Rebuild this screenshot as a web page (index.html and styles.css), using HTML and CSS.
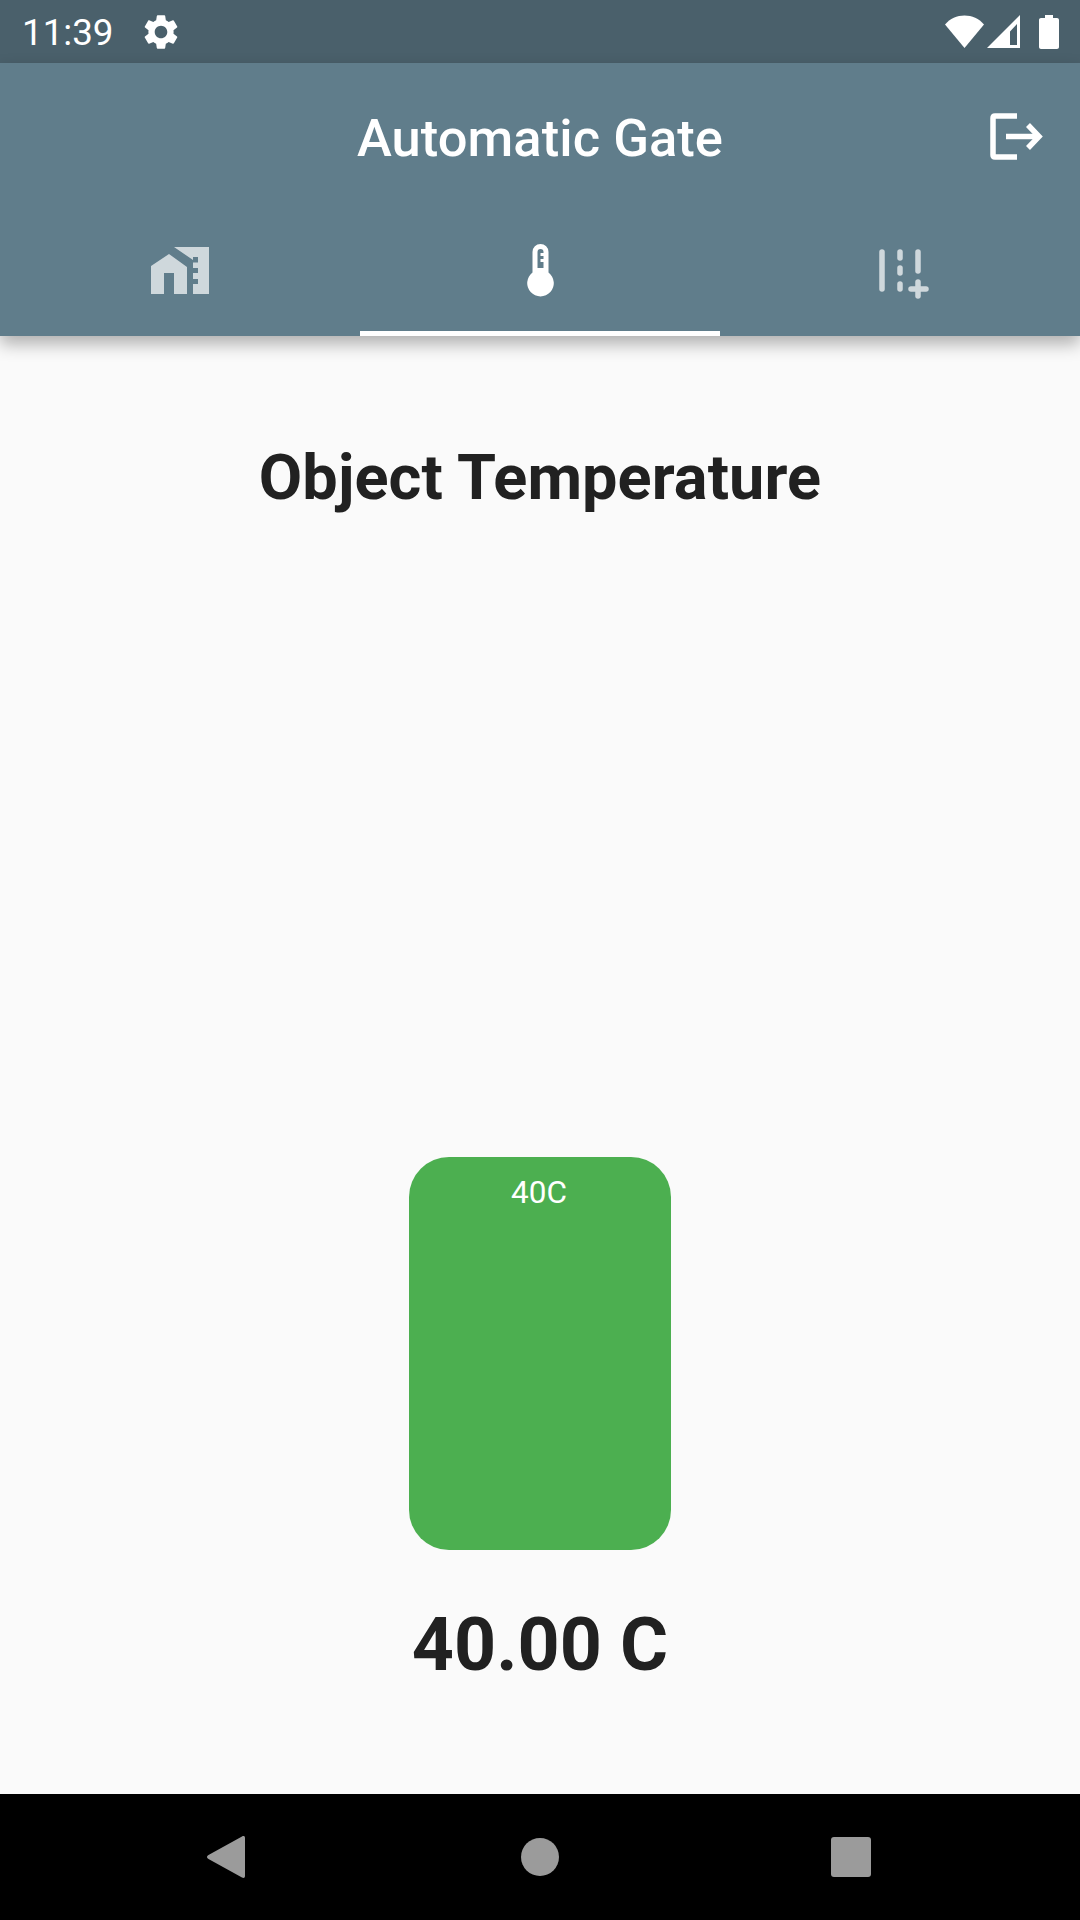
FILE: index.html
```html
<!DOCTYPE html>
<html lang="en">
<head>
    <meta charset="UTF-8">
    <meta name="viewport" content="width=device-width, initial-scale=1.0">
    <title>Automatic Gate</title>
    <link rel="stylesheet" href="styles.css">
</head>
<body>
    <div class="status-bar">
        <span class="clock">11:39</span>
        <svg class="gear" viewBox="0 0 24 24"><path d="M19.14 12.94c.04-.3.06-.61.06-.94 0-.32-.02-.64-.07-.94l2.03-1.58a.49.49 0 0 0 .12-.61l-1.92-3.32a.488.488 0 0 0-.59-.22l-2.39.96c-.5-.38-1.03-.7-1.62-.94l-.36-2.54a.484.484 0 0 0-.48-.41h-3.84c-.24 0-.43.17-.47.41l-.36 2.54c-.59.24-1.13.57-1.62.94l-2.39-.96c-.22-.08-.47 0-.59.22L2.74 8.87c-.12.21-.08.47.12.61l2.03 1.58c-.05.3-.09.63-.09.94s.02.64.07.94l-2.03 1.58a.49.49 0 0 0-.12.61l1.92 3.32c.12.22.37.29.59.22l2.39-.96c.5.38 1.03.7 1.62.94l.36 2.54c.05.24.24.41.48.41h3.84c.24 0 .44-.17.47-.41l.36-2.54c.59-.24 1.13-.56 1.62-.94l2.39.96c.22.08.47 0 .59-.22l1.92-3.32c.12-.22.07-.47-.12-.61l-2.01-1.58zM12 15.6c-1.98 0-3.6-1.62-3.6-3.6s1.62-3.6 3.6-3.6 3.6 1.62 3.6 3.6-1.62 3.6-3.6 3.6z"/></svg>
        <div class="status-icons">
            <svg class="wifi" viewBox="0 0 39 33"><path d="M0 9.500C5 3.600 12 0.500 19.500 0.500S34 3.600 39 9.500L19.500 33z"/></svg>
            <svg class="signal" viewBox="0 0 33 33"><path fill-rule="evenodd" d="M33 0V33H0zM30 9 23 16.500V30H30z"/></svg>
            <svg class="battery" viewBox="0 0 20 34"><path d="M6 0H14V3H18C19.100 3 20 3.900 20 5V32C20 33.100 19.100 34 18 34H2C.9 34 0 33.100 0 32V5C0 3.900 .9 3 2 3H6z"/></svg>
        </div>
    </div>

    <header class="app-bar">
        <div class="title-row">
            <h1 class="app-title">Automatic Gate</h1>
            <svg class="logout" viewBox="0 0 53 47" fill="none" stroke="#fff" stroke-width="5.500">
                <path d="M27 3H5Q3 3 3 5V42Q3 44 5 44H27"/>
                <path d="M16 23.500H47"/>
                <path d="M38 12 49 23.500 38 35"/>
            </svg>
        </div>
        <nav class="tabs">
            <div class="tab">
                <svg class="tab-icon home" viewBox="0 0 58 47">
                    <path d="M0 19 18 7 36 20V47H23V26H13V47H0z"/>
                    <path d="M23 0H58V47H42V37H47V32H42V26H47V21H42V15.500H47V10H42V13z"/>
                </svg>
            </div>
            <div class="tab tab-active">
                <svg class="tab-icon thermo" viewBox="0 0 27 53"><path fill-rule="evenodd" d="M5.500 8a8 8 0 0 1 16 0V28.500a13.300 13.300 0 1 1-16 0zM10.500 8V24H16.500V18H13.500V15H16.500V12H13.500V9H16.500V8a3 3 0 0 0-6 0z"/></svg>
            </div>
            <div class="tab">
                <svg class="tab-icon tune" viewBox="0 0 50 50" fill="none" stroke="#fff" stroke-width="5.500" stroke-linecap="round">
                    <path d="M3 3V40"/>
                    <path d="M21 3V9"/>
                    <path d="M21 19V24"/>
                    <path d="M21 35V40"/>
                    <path d="M39 3V22"/>
                    <path d="M39 33V47"/>
                    <path d="M32 40H47"/>
                </svg>
            </div>
        </nav>
    </header>

    <main class="content">
        <h2 class="heading">Object Temperature</h2>
        <div class="gauge">40C</div>
        <p class="reading">40.00 C</p>
    </main>

    <footer class="nav-bar">
        <svg class="nav-back" viewBox="0 0 38 42"><path d="M35 .5C36.500-.5 38 0 38 2V40C38 42 36.500 42.500 35 41.500L1.500 23C-.5 22-.5 20 1.500 19z"/></svg>
        <div class="nav-home"></div>
        <div class="nav-recent"></div>
    </footer>
</body>
</html>
```

FILE: styles.css
```css
* {
    box-sizing: border-box;
}
html, body {
    margin: 0;
    padding: 0;
}
body {
    width: 1080px;
    height: 1920px;
    display: flex;
    flex-direction: column;
    font-family: Roboto, "Noto Sans", sans-serif;
    background-color: #fafafa;
    color: #212121;
    overflow: hidden;
}

/* status bar */
.status-bar {
    height: 63px;
    flex: none;
    display: flex;
    align-items: center;
    background-color: #4a606b;
    padding: 0 21px 0 22px;
    color: #fff;
}
.clock {
    font-size: 36.75px;
    line-height: 63px;
    margin-top: 2px;
}
.gear {
    width: 42px;
    height: 42px;
    margin-left: 26px;
    fill: #fff;
}
.status-icons {
    margin-left: auto;
    display: flex;
    align-items: center;
}
.status-icons svg {
    fill: #fff;
}
.wifi {
    width: 39px;
    height: 33px;
}
.signal {
    width: 33px;
    height: 33px;
    margin-left: 3px;
}
.battery {
    width: 20px;
    height: 34px;
    margin-left: 19px;
}

/* app bar */
.app-bar {
    height: 273px;
    flex: none;
    background-color: #607d8b;
    box-shadow: 0 8px 16px rgba(0, 0, 0, 0.3);
    position: relative;
    display: flex;
    flex-direction: column;
}
.title-row {
    height: 147px;
    display: flex;
    align-items: center;
    justify-content: center;
    position: relative;
}
.app-title {
    margin: 2px 0 0;
    font-size: 52.5px;
    font-weight: 500;
    letter-spacing: 0.05px;
    color: #fff;
}
.logout {
    position: absolute;
    right: 37px;
    top: 50px;
    width: 53px;
    height: 47px;
}
.tabs {
    flex: 1;
    display: flex;
}
.tab {
    flex: 1;
    display: flex;
    justify-content: center;
    padding-top: 34px;
    border-bottom: 5px solid transparent;
    opacity: 0.7;
}
.tab-active {
    border-bottom-color: #fff;
    opacity: 1;
}
.tab-icon {
    fill: #fff;
}
.home {
    width: 58px;
    height: 47px;
    margin-top: 3px;
}
.thermo {
    width: 27px;
    height: 53px;
}
.tune {
    width: 50px;
    height: 50px;
    fill: none;
    margin: 5px 0 0 8px;
}

/* content */
.content {
    flex: 1;
    display: flex;
    flex-direction: column;
    align-items: center;
}
.heading {
    margin: 107px 0 0;
    font-size: 63px;
    font-weight: 700;
    letter-spacing: 0.1px;
    line-height: 70px;
}
.gauge {
    width: 262px;
    height: 393px;
    margin-top: 644px;
    background-color: #4caf50;
    border-radius: 40px;
    color: #fff;
    font-size: 31.5px;
    text-align: center;
    padding: 18px 2px 0 0;
    line-height: 35px;
}
.reading {
    margin: 53px 0 0;
    font-size: 73.5px;
    font-weight: 700;
    line-height: 84px;
}

/* navigation bar */
.nav-bar {
    height: 126px;
    flex: none;
    background-color: #000;
    position: relative;
    display: flex;
    align-items: center;
    padding: 0 0 1px 207px;
}
.nav-back {
    width: 38px;
    height: 42px;
    fill: #9b9b9b;
}
.nav-home {
    width: 38px;
    height: 38px;
    margin-left: 276px;
    border-radius: 50%;
    background-color: #9b9b9b;
}
.nav-recent {
    width: 40px;
    height: 40px;
    margin-left: 272px;
    border-radius: 3px;
    background-color: #9b9b9b;
}
```
